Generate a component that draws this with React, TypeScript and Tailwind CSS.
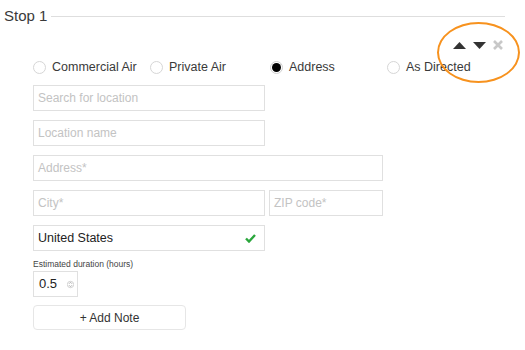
import React from "react";

function Radio({ label, checked, width }: { label: string; checked?: boolean; width: string }) {
  return (
    <div className={`flex items-center ${width}`}>
      {checked ? (
        <span className="w-[13px] h-[13px] rounded-full border border-[#d0d0d0] bg-white flex items-center justify-center">
          <span className="w-[9px] h-[9px] rounded-full bg-black" />
        </span>
      ) : (
        <span className="w-[13px] h-[13px] rounded-full border border-[#d6d6d6] bg-white" />
      )}
      <span className="ml-[6px] text-[12.5px] text-[#3a3a3a]">{label}</span>
    </div>
  );
}

function Field({ placeholder, width }: { placeholder: string; width: string }) {
  return (
    <div className={`h-[26px] ${width} border border-[#e0e0e0] flex items-center pl-[4px] text-[12px] text-[#c3c3c3]`}>
      {placeholder}
    </div>
  );
}

export default function App() {
  return (
    <div
      className="w-[525px] h-[350px] bg-white relative overflow-hidden"
      style={{ fontFamily: '"Liberation Sans", Arial, sans-serif' }}
    >
      {/* header */}
      <div className="flex items-center h-[32px] pl-[4px] pr-[20px]">
        <span className="text-[15px] text-[#3a3a3a]">Stop 1</span>
        <div className="flex-1 h-px bg-[#dedede] ml-[4px]" />
      </div>

      {/* arrows row */}
      <div className="flex justify-end items-center h-[26px] pr-[22px] gap-[7px]">
        <svg width="13" height="7" viewBox="0 0 13 7">
          <polygon points="6.5,0 13,7 0,7" fill="#333" />
        </svg>
        <svg width="13" height="7" viewBox="0 0 13 7">
          <polygon points="0,0 13,0 6.5,7" fill="#333" />
        </svg>
        <svg width="10" height="10" viewBox="0 0 10 10">
          <path d="M1 1 L9 9 M9 1 L1 9" stroke="#c8c8c8" strokeWidth="2.6" strokeLinecap="butt" />
        </svg>
      </div>

      {/* orange highlight */}
      <div className="absolute left-[437px] top-[22px] w-[83px] h-[61px] rounded-[50%] border-2 border-[#f7921e]" />

      {/* radios */}
      <div className="flex items-center h-[18px] pl-[33px]">
        <Radio label="Commercial Air" width="w-[117px]" />
        <Radio label="Private Air" width="w-[120px]" />
        <Radio label="Address" checked width="w-[117px]" />
        <Radio label="As Directed" width="w-[100px]" />
      </div>

      {/* fields */}
      <div className="flex flex-col gap-[9px] pl-[33px] mt-[9px]">
        <Field placeholder="Search for location" width="w-[232px]" />
        <Field placeholder="Location name" width="w-[232px]" />
        <Field placeholder="Address*" width="w-[350px]" />
        <div className="flex gap-[4px]">
          <Field placeholder="City*" width="w-[232px]" />
          <Field placeholder="ZIP code*" width="w-[114px]" />
        </div>
        <div className="h-[26px] w-[232px] border border-[#e0e0e0] flex items-center justify-between pl-[4px] pr-[8px] text-[12.5px] text-[#222]">
          <span>United States</span>
          <svg width="11" height="9" viewBox="0 0 11 9">
            <path d="M1 4.5 L4 7.5 L10 1" stroke="#2aa63c" strokeWidth="2.4" fill="none" />
          </svg>
        </div>
      </div>

      <div className="pl-[33px] mt-[7px] text-[8.5px] text-[#444] leading-[12px]">Estimated duration (hours)</div>
      <div className="pl-[33px] mt-[1px]">
        <div className="h-[26px] w-[45px] border border-[#e0e0e0] flex items-center pl-[5px] text-[13px] text-[#222]">
          <span>0.5</span>
          <svg width="7" height="9" viewBox="0 0 7 9" className="ml-[10px]">
            <circle cx="3.5" cy="4.5" r="3.2" fill="none" stroke="#c8c8c8" strokeWidth="0.8" />
            <path d="M2 3.8 L3.5 2.3 L5 3.8 M2 5.2 L3.5 6.7 L5 5.2" stroke="#999" strokeWidth="0.7" fill="none" />
          </svg>
        </div>
      </div>
      <div className="pl-[33px] mt-[8px]">
        <div className="h-[25px] w-[153px] border border-[#e6e6e6] rounded-[4px] flex items-center justify-center text-[12px] text-[#333]">
          + Add Note
        </div>
      </div>
    </div>
  );
}
